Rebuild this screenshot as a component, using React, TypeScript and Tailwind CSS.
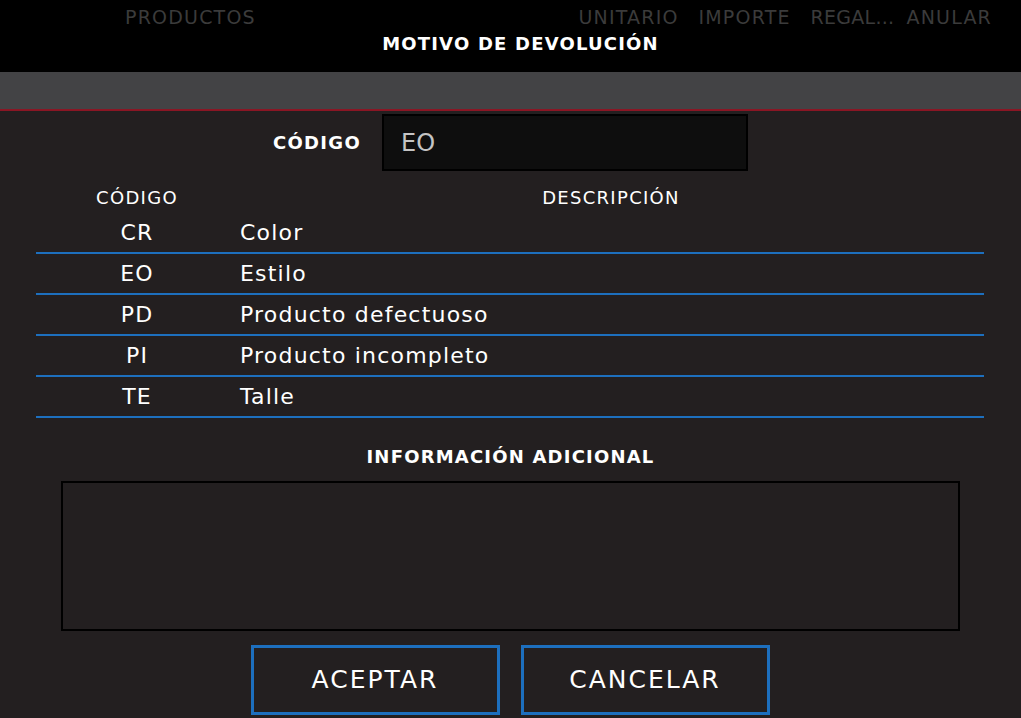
import React from "react";

const rows = [
  { c: "CR", d: "Color" },
  { c: "EO", d: "Estilo" },
  { c: "PD", d: "Producto defectuoso" },
  { c: "PI", d: "Producto incompleto" },
  { c: "TE", d: "Talle" },
];

export default function App() {
  return (
    <div
      className="w-[1021px] h-[718px] overflow-hidden flex flex-col bg-[#231f20] text-white"
      style={{ fontFamily: '"DejaVu Sans", "Noto Sans", sans-serif' }}
    >
      <div className="h-[72px] bg-black flex flex-col shrink-0">
        <div className="h-[34px] flex items-center text-[19px] tracking-[1.2px] text-[#3b3b3b] leading-none">
          <span className="ml-[125px]">PRODUCTOS</span>
          <div className="ml-auto flex mr-[29px]">
            <span className="w-[120px] shrink-0">UNITARIO</span>
            <span className="w-[112px] shrink-0">IMPORTE</span>
            <span className="shrink-0 whitespace-nowrap tracking-[0.3px]">REGAL...</span>
            <span className="shrink-0 ml-[12px]">ANULAR</span>
          </div>
        </div>
        <div className="flex justify-center pl-[20px] pt-[1px] text-[18px] font-bold tracking-[1.2px] leading-none">
          MOTIVO DE DEVOLUCIÓN
        </div>
      </div>
      <div className="h-[39px] bg-[#434345] border-b-2 border-[#8a1624] shrink-0" />
      <div className="flex flex-col flex-1">
        <div className="flex items-center mt-[3px] h-[57px]">
          <div className="w-[361px] text-right text-[18px] font-bold tracking-[1.3px]">CÓDIGO</div>
          <div className="ml-[21px] w-[366px] h-[57px] bg-[#0e0e0e] border-2 border-black flex items-center pl-[17px] text-[24px] text-[#c4c4c4]">
            EO
          </div>
        </div>
        <div className="mx-[36px] mr-[37px] mt-[14px]">
          <div className="flex text-[18px] tracking-[1.3px] h-[28px] pb-[4px] items-center">
            <div className="w-[202px] text-center">CÓDIGO</div>
            <div className="flex-1 text-center">DESCRIPCIÓN</div>
          </div>
          {rows.map((r) => (
            <div
              key={r.c}
              className="flex h-[41px] items-center border-b-2 border-[#1d6fbe] text-[22px] tracking-[1.2px] leading-none"
            >
              <div className="w-[202px] text-center">{r.c}</div>
              <div className="ml-[2px]">{r.d}</div>
            </div>
          ))}
        </div>
        <div className="text-center text-[18px] font-bold tracking-[1.2px] mt-[30px] leading-none">
          INFORMACIÓN ADICIONAL
        </div>
        <div className="mx-[61px] w-[899px] h-[150px] border-2 border-black mt-[15px]" />
        <div className="flex justify-center gap-[21px] mt-[14px] ml-[-1px]">
          <button className="w-[249px] h-[70px] border-[3px] border-[#1d6fbe] text-[25px] tracking-[2px] text-white flex items-center justify-center">
            ACEPTAR
          </button>
          <button className="w-[249px] h-[70px] border-[3px] border-[#1d6fbe] text-[25px] tracking-[2px] text-white flex items-center justify-center">
            CANCELAR
          </button>
        </div>
      </div>
    </div>
  );
}
